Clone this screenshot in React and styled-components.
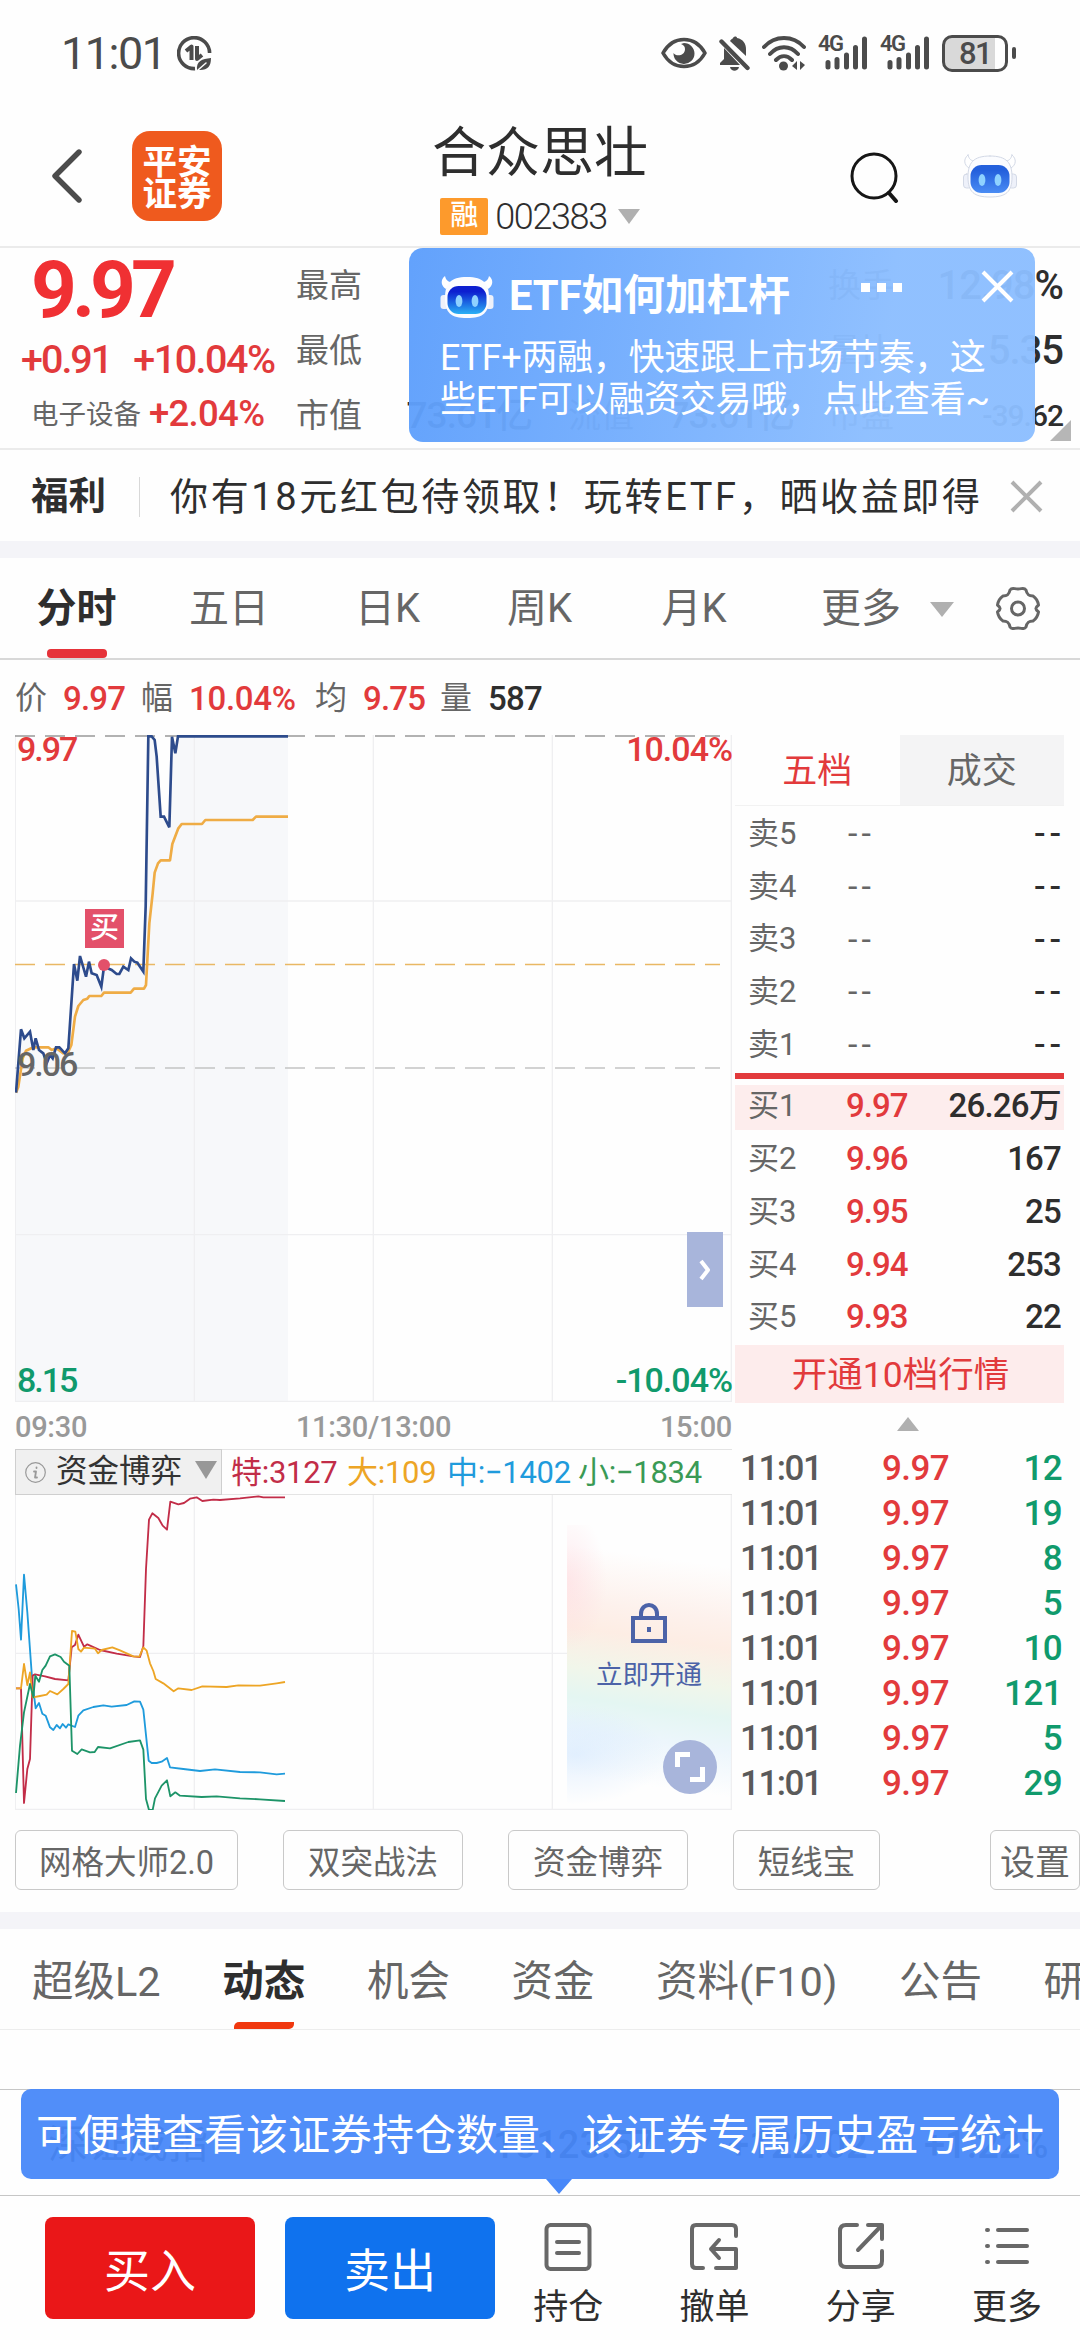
import React from 'react';
import styled, { createGlobalStyle } from 'styled-components';

const colors = {
  red: '#e23a3c',
  green: '#109a6c',
  text: '#2e2e2e',
  grey: '#666666',
  light: '#999999',
  line: '#ededed',
  periwinkle: '#a8b5db',
};

const GlobalStyle = createGlobalStyle`
  * {
    box-sizing: border-box;
  }

  body {
    margin: 0;
    background: #fefefe;
    font-family: Roboto, 'Noto Sans CJK SC', sans-serif;
    color: ${colors.text};
  }
`;

const Screen = styled.div`
  position: relative;
  width: 1080px;
  height: 2340px;
  overflow: hidden;
  display: flex;
  flex-direction: column;
  background: #fefefe;
  white-space: nowrap;
  line-height: 1;
`;

const Num = styled.span`
  font-size: ${({ size }) => size || 33}px;
  font-weight: ${({ weight }) => weight || 500};
  letter-spacing: ${({ track }) => track || 0}px;
  color: ${({ color }) => color || 'inherit'};
`;

/* ---------- status bar ---------- */

const StatusBar = styled.header`
  height: 107px;
  flex: none;
  display: flex;
  align-items: center;
  justify-content: space-between;
  padding: 0 64px 1px 61px;
  color: #4b4b4b;
`;

const StatusGroup = styled.div`
  display: flex;
  align-items: center;
  gap: ${({ gap }) => gap}px;
`;

const Signal = styled.div`
  position: relative;
  width: 50px;
  height: 36px;
`;

const SignalLabel = styled.span`
  position: absolute;
  left: 0;
  top: 0;
  font-size: 22px;
  font-weight: 600;
  line-height: 18px;
  letter-spacing: -1.5px;
`;

const Battery = styled.div`
  width: 66px;
  height: 37px;
  border: 3px solid #4b4b4b;
  border-radius: 10px;
  display: flex;
  align-items: center;
  justify-content: center;
  background: linear-gradient(90deg, #d9d9d9 84%, #fefefe 84%);
  font-size: 31px;
  font-weight: 500;
  letter-spacing: -1.5px;
`;

const BatteryTip = styled.div`
  width: 4px;
  height: 12px;
  border-radius: 2px;
  background: #4b4b4b;
`;

/* ---------- title bar ---------- */

const TitleBar = styled.div`
  height: 141px;
  flex: none;
  display: grid;
  grid-template-columns: 240px 600px 240px;
  border-bottom: 2px solid #ebebeb;
`;

const TitleLeft = styled.div`
  display: flex;
  align-items: center;
  padding: 0 0 2px 51px;
  gap: 48px;
`;

const Logo = styled.div`
  width: 90px;
  height: 90px;
  border-radius: 18px;
  background: #ef5a1e;
  color: #fff;
  display: flex;
  align-items: center;
  justify-content: center;
  text-align: center;
  white-space: normal;
  font-size: 34.5px;
  line-height: 32px;
  font-weight: 700;
  padding: 5px 8px 0;
`;

const TitleCenter = styled.div`
  display: flex;
  flex-direction: column;
  align-items: center;
  padding-top: 20px;
`;

const StockName = styled.h1`
  margin: 0;
  font-size: 54px;
  line-height: 54px;
  font-weight: 400;
`;

const CodeRow = styled.div`
  display: flex;
  align-items: center;
  height: 37px;
  margin-top: 17px;
`;

const MarginTag = styled.span`
  width: 48px;
  height: 37px;
  border-radius: 2px;
  background: #fd9a2c;
  color: #fff;
  font-size: 28px;
  line-height: 35px;
  font-weight: 500;
  text-align: center;
  margin-right: 7px;
`;

const Triangle = styled.i`
  width: 0;
  height: 0;
  margin-left: ${({ gap }) => gap || 0}px;
  border-left: ${({ w }) => w / 2}px solid transparent;
  border-right: ${({ w }) => w / 2}px solid transparent;
  border-${({ up }) => (up ? 'bottom' : 'top')}: ${({ h }) => h}px solid #b0b0b0;
`;

const TitleRight = styled.div`
  display: flex;
  align-items: center;
  gap: 64px;
  padding: 0 0 2px 9px;
`;

/* ---------- quote ---------- */

const Quote = styled.section`
  position: relative;
  height: 202px;
  flex: none;
  display: flex;
  border-bottom: 2px solid #ebebeb;
`;

const PriceBlock = styled.div`
  width: 296px;
  flex: none;
  color: #f03033;
`;

const LastPrice = styled.div`
  height: 80px;
  padding: 2px 0 0 31px;
  font-size: 80px;
  line-height: 80px;
  font-weight: 700;
  letter-spacing: -5px;
`;

const ChangeRow = styled.div`
  display: flex;
  align-items: center;
  height: 58px;
  padding: 6px 0 0 21px;
  gap: 22px;
  color: ${colors.red};
`;

const IndustryRow = styled.div`
  display: flex;
  align-items: center;
  height: 58px;
  padding: 0 0 1px 31px;
  gap: 8px;
  font-size: 27.5px;
  color: ${colors.grey};
`;

const Stats = styled.div`
  flex: 1;
  display: grid;
  grid-template-columns: 64px 172px 36px 64px 162px 34px 58px 1fr;
  grid-template-rows: repeat(3, 65px);
  align-items: center;
  padding: 5px 17px 0 0;
  font-size: 33px;
  color: ${colors.grey};
`;

const StatLabel = styled.span`
  grid-column: ${({ col }) => col};
`;

const StatValue = styled.span`
  text-align: right;
  font-size: ${({ size }) => size || 37}px;
  font-weight: 500;
  letter-spacing: -1px;
  color: ${colors.text};
`;

const Corner = styled.i`
  position: absolute;
  right: 9px;
  bottom: 7px;
  border-left: 21px solid transparent;
  border-bottom: 21px solid #b6b6b6;
`;

const Promo = styled.aside`
  position: absolute;
  left: 409px;
  top: 0;
  width: 626px;
  height: 194px;
  padding: 27px 0 0 31px;
  border-radius: 14px;
  background: linear-gradient(100deg, rgba(92, 158, 252, 0.96), rgba(140, 190, 255, 0.96) 75%);
  color: #fff;
`;

const PromoHead = styled.div`
  display: flex;
  align-items: center;
  height: 42px;
`;

const PromoTitle = styled.strong`
  margin-left: 15px;
  width: 352px;
  font-size: 41.7px;
  font-weight: 700;
`;

const PromoText = styled.p`
  margin: 20px 0 0;
  font-size: 36px;
  line-height: 42px;
  letter-spacing: -0.3px;
`;

const Dots = styled.div`
  display: flex;
  gap: 7px;
  margin-bottom: 18px;

  i {
    width: 9px;
    height: 9px;
    background: #fff;
  }
`;

const PromoClose = styled.div`
  margin: 0 0 20px 79px;

  svg {
    display: block;
  }
`;

/* ---------- notice ---------- */

const Notice = styled.div`
  height: 91px;
  flex: none;
  display: flex;
  align-items: center;
  padding: 2px 37px 0 31px;
  font-size: 38px;
`;

const NoticeTag = styled.b`
  font-size: 37.5px;
  width: 108px;
`;

const NoticeText = styled.span`
  flex: 1;
  padding-left: 30px;
  letter-spacing: 2.65px;
  border-left: 1px solid #d8d8d8;
  line-height: 40px;
`;

const Band = styled.div`
  height: 17px;
  flex: none;
  background: #f4f4f8;
`;

/* ---------- period tabs ---------- */

const PeriodTabs = styled.nav`
  height: 102px;
  flex: none;
  display: grid;
  grid-template-columns: 153px 152px 165px 139px 170px 217px 1fr;
  justify-items: center;
  align-items: center;
  border-bottom: 2px solid #d8d8d8;
  font-size: 40px;
  color: ${colors.grey};
`;

const Tab = styled.span`
  position: relative;
  height: 100%;
  display: flex;
  align-items: center;
  padding-top: 2px;
  font-weight: ${({ active }) => (active ? 700 : 400)};
  color: ${({ active }) => (active ? colors.text : 'inherit')};

  &::after {
    content: '';
    position: absolute;
    display: ${({ active }) => (active ? 'block' : 'none')};
    left: 50%;
    bottom: 0;
    width: 60px;
    height: ${({ slim }) => (slim ? 7 : 9)}px;
    margin-left: -30px;
    border-radius: ${({ slim }) => (slim ? '5px 0 5px 0' : '4px')};
    background: ${({ slim }) => (slim ? '#f0380f' : '#e6333a')};
  }
`;

const GearSlot = styled.div`
  justify-self: start;
  height: 44px;
`;

const InfoRow = styled.div`
  height: 75px;
  flex: none;
  display: flex;
  align-items: center;
  padding: 1px 0 0 15px;
  font-size: 32px;
  color: ${colors.grey};
`;

const InfoValue = styled(Num)`
  width: ${({ w }) => w}px;
  padding-left: 16px;
`;

/* ---------- market area ---------- */

const Market = styled.main`
  height: 1075px;
  flex: none;
  display: grid;
  grid-template-columns: 717px 331px;
  column-gap: 3px;
  padding-left: 15px;
`;

const ChartBox = styled.div`
  position: relative;
  height: ${({ h }) => h}px;

  svg {
    display: block;
  }
`;

const AxisLabel = styled(Num)`
  position: absolute;
  font-size: 34px;
  letter-spacing: ${({ side }) => (side === 'right' ? -1 : -2)}px;
  line-height: 26px;
  ${({ side }) => (side === 'right' ? 'right: 0' : 'left: 2px')};
  top: ${({ y }) => y}px;
`;

const BuyMark = styled.span`
  position: absolute;
  left: 70px;
  top: 174px;
  width: 39px;
  height: 39px;
  background: #e3506a;
  color: #fff;
  font-size: 29px;
  line-height: 38px;
  text-align: center;
  font-weight: 500;
`;

const SideButton = styled.span`
  position: absolute;
  left: 672px;
  top: 497px;
  width: 36px;
  height: 75px;
  display: flex;
  align-items: center;
  justify-content: center;
  background: ${colors.periwinkle};
`;

const TimeAxis = styled.div`
  height: 47px;
  padding-top: 3px;
  display: grid;
  grid-template-columns: 1fr auto 1fr;
  align-items: center;
  color: ${colors.light};
  font-size: 29px;
  font-weight: 500;
  letter-spacing: -0.3px;

  span:last-child {
    text-align: right;
  }
`;

const FlowHead = styled.div`
  height: 46px;
  display: flex;
  align-items: center;
  border-top: 1px solid #e4e4e4;
  border-bottom: 1px solid #e4e4e4;
`;

const FlowSelect = styled.div`
  flex: none;
  width: 207px;
  height: 46px;
  display: flex;
  align-items: center;
  margin-right: 9px;
  padding-left: 9px;
  border: 1px solid #cfcfcf;
  background: #f0f0f0;
  font-size: 31.5px;
  color: #333;

  svg {
    margin-right: 10px;
  }

  i {
    margin: -4px 0 0 13px;
    border-top-color: #989898;
  }
`;

const FlowItem = styled.span`
  flex: none;
  width: ${({ w }) => w}px;
  font-size: 31px;
  letter-spacing: -0.3px;
  color: ${({ color }) => color};
`;

const LockPanel = styled.div`
  position: absolute;
  left: 552px;
  top: 30px;
  width: 164px;
  height: 280px;
  display: flex;
  flex-direction: column;
  align-items: center;
  padding-top: 78px;
  font-size: 26.5px;
  color: #4c63a8;
  background:
    radial-gradient(ellipse 40px 70px at 0 20%, rgba(255, 214, 222, 0.5), transparent),
    radial-gradient(ellipse 90px 50px at 5% 82%, rgba(205, 228, 255, 0.5), transparent),
    linear-gradient(
      188deg,
      rgba(255, 255, 255, 0) 14%,
      #fdf1ec 32%,
      #fdede4 41%,
      #f1f6ea 54%,
      #e4f6f2 64%,
      #edf6fc 75%,
      rgba(255, 255, 255, 0) 90%
    );

  svg {
    margin-bottom: 18px;
  }
`;

const ExpandButton = styled.span`
  position: absolute;
  left: 648px;
  top: 245px;
  width: 54px;
  height: 54px;
  border-radius: 50%;
  background: ${colors.periwinkle};
`;

const BookColumn = styled.div`
  display: flex;
  flex-direction: column;
  width: 329px;
`;

const BookTabs = styled.div`
  display: grid;
  grid-template-columns: 1fr 1fr;
  height: 71px;
  flex: none;
  border-bottom: 1px solid #f2f2f2;
  margin-bottom: 1px;
`;

const BookTab = styled.span`
  display: flex;
  align-items: center;
  justify-content: center;
  padding-top: 2px;
  font-size: 35px;
  color: ${({ active }) => (active ? colors.red : colors.grey)};
  background: ${({ active }) => (active ? 'transparent' : '#f4f4f5')};
`;

const BookRow = styled.div`
  height: ${({ highlight }) => (highlight ? 45 : 52.7)}px;
  margin: ${({ highlight }) => (highlight ? '6px 0 2px' : '0')};
  flex: none;
  display: grid;
  grid-template-columns: 98px 90px 1fr;
  align-items: center;
  padding: 0 3px ${({ highlight }) => (highlight ? 4 : 0)}px 13px;
  font-size: 31px;
  color: ${colors.grey};
  background: ${({ highlight }) => (highlight ? '#fdeded' : 'transparent')};
`;

const Volume = styled(Num)`
  text-align: right;
`;

const Dashes = styled(Num)`
  text-align: ${({ right }) => (right ? 'right' : 'left')};
  font-size: 34px;
  letter-spacing: 4px;
  margin: 0 ${({ right }) => (right ? -4 : 0)}px 0 2px;
`;

const Divider = styled.div`
  height: 6px;
  flex: none;
  margin-top: 3px;
  background: ${colors.red};
`;

const Unlock = styled.div`
  height: 58px;
  flex: none;
  margin-top: 2px;
  display: flex;
  align-items: center;
  justify-content: center;
  padding: 4px 0 0 2px;
  font-size: 35.5px;
  color: ${colors.red};
  background: #fdecec;
`;

const Fold = styled.div`
  height: 42px;
  flex: none;
  display: flex;
  justify-content: center;
  padding: 14px 0 0 16px;
`;

const TradeRow = styled.div`
  height: 45px;
  flex: none;
  display: grid;
  grid-template-columns: 142px 90px 1fr;
  align-items: center;
  padding: 2px 2px 0 5px;
`;

/* ---------- tools and lower tabs ---------- */

const Tools = styled.div`
  height: 102px;
  flex: none;
  display: flex;
  align-items: flex-start;
  padding: 20px 0 0 15px;
`;

const Tool = styled.button`
  flex: none;
  width: ${({ w }) => w}px;
  height: 60px;
  margin: 0 ${({ after }) => after}px 0 0;
  padding: 0 0 2px;
  border: 1px solid #c9c9c9;
  border-radius: 6px;
  background: #fefefe;
  font: 400 ${({ size }) => size || 32.5}px Roboto, 'Noto Sans CJK SC', sans-serif;
  color: ${colors.grey};
`;

const LowerTabs = styled.nav`
  height: 101px;
  flex: none;
  display: flex;
  border-bottom: 1px solid #ededed;
  padding-left: 32px;
  font-size: 41.5px;
  color: ${colors.grey};

  > span {
    margin-right: 61.6px;
    padding-top: 5px;
  }
`;

const IndexStrip = styled.div`
  position: relative;
  height: 107px;
  flex: none;
  margin-top: 59px;
  display: grid;
  grid-template-columns: 445px 235px 196px 1fr;
  align-items: center;
  padding: 4px 0 0 48px;
  border-top: 1px solid #c6c6c6;
  border-bottom: 1px solid #c6c6c6;
  font-size: 40px;
`;

const Tip = styled.div`
  position: absolute;
  left: 21px;
  top: -1px;
  width: 1038px;
  height: 90px;
  border-radius: 10px;
  background: rgba(72, 136, 249, 0.95);
  color: #fff;
  font-size: 42px;
  line-height: 93px;
  padding-left: 15px;

  &::after {
    content: '';
    position: absolute;
    left: 525px;
    top: 90px;
    border: 13.5px solid transparent;
    border-top: 15px solid #4888f9;
    border-bottom: 0;
  }
`;

const Footer = styled.footer`
  flex: 1;
  display: flex;
  padding: 21px 0 0 45px;
`;

const TradeButton = styled.button`
  flex: none;
  width: 210px;
  height: 102px;
  margin: 0 30px 0 0;
  padding: 0 0 3px;
  border: 0;
  border-radius: 8px;
  background: ${({ bg }) => bg};
  color: #fff;
  font: 400 46px Roboto, 'Noto Sans CJK SC', sans-serif;
`;

const Actions = styled.div`
  display: grid;
  grid-template-columns: repeat(4, 146.3px);
  margin-left: -30px;
  padding-top: 5px;
`;

const Action = styled.div`
  display: flex;
  flex-direction: column;
  align-items: center;
  font-size: 35px;
  gap: 18px;
`;

/* ---------- icons ---------- */

const Icon = ({ w, h, box, stroke = 'currentColor', sw = 4, children }) => (
  <svg
    width={w}
    height={h}
    viewBox={box || `0 0 ${w} ${h}`}
    fill="none"
    stroke={stroke}
    strokeWidth={sw}
    strokeLinecap="round"
    strokeLinejoin="round"
  >
    {children}
  </svg>
);

const DataSaver = () => (
  <Icon w={35} h={35} sw={3.6}>
    <path d="M32.6 17 A15.5 15.5 0 1 0 18 32.6" strokeLinecap="butt" />
    <path d="M9 15 L14.5 10.5 V24 M20 10 V23 L25 19" strokeLinecap="butt" strokeWidth="4" />
    <path d="M20 34 C19 25 25 23 34 22 C34 30 31 34 23 34 Z" fill="currentColor" stroke="none" />
    <path d="M21 34 L29 27" stroke="#fefefe" strokeWidth="1.5" />
  </Icon>
);

const EyeIcon = () => (
  <Icon w={46} h={32} sw={3.6}>
    <path d="M2 16 C12 -2 34 -2 44 16 C34 34 12 34 2 16 Z" />
    <path d="M23 6 A10.5 10.5 0 1 1 12.5 16 C15 20 24 19 24 12 C24 9 22 8 20 7 Z" fill="currentColor" stroke="none" />
  </Icon>
);

const BellOffIcon = () => (
  <Icon w={31} h={35}>
    <path
      d="M11 5 C12 3 14 2.5 14 2 C15 0 18 0 18 2 C24 3 27 8 27 13 V20 Z M5 12 L21 29 H1 V27 L5 23 Z M11 31 H20 C19 36 12 36 11 31 Z"
      fill="currentColor"
      stroke="none"
    />
    <path d="M2.5 5.5 L28.5 32" strokeWidth="4.4" />
  </Icon>
);

const WifiIcon = () => (
  <Icon w={44} h={35} sw={4}>
    <path d="M2 11 C13 -1 31 -1 42 11 M8 18 C16 9 28 9 36 18 M14 24 C19 19 25 19 30 24" />
    <circle cx="21.5" cy="30" r="4.5" fill="currentColor" stroke="none" />
    <path d="M35 25 V34 L30 30 Z M38 25 V34 L43 29 Z" fill="currentColor" stroke="none" />
  </Icon>
);

const SignalIcon = () => (
  <Signal>
    <SignalLabel>4G</SignalLabel>
    <Icon w={50} h={36} sw={5}>
      <path d="M10 27.5 V32 M19 24.5 V32 M28.5 20 V32 M37.5 12.5 V32 M46.5 4 V32" />
    </Icon>
  </Signal>
);

const Robot = ({ pale }) => (
  <Icon w={54} h={45} stroke={pale ? '#d3d9e6' : 'none'} sw={1}>
    <defs>
      <linearGradient id={pale ? 'visorPale' : 'visor'} x1="0" y1="0" x2="0" y2="1">
        <stop offset="0.2" stopColor={pale ? '#2460dc' : '#0c1fd0'} />
        <stop offset="1" stopColor={pale ? '#4a8cf4' : '#2bb0f5'} />
      </linearGradient>
    </defs>
    <path d="M5 2 C0 6 1 12 6 15 L12 8 C8 8 6 6 5 2 Z M49 2 C54 6 53 12 48 15 L42 8 C46 8 48 6 49 2 Z" fill="#fff" />
    <rect x="0.5" y="21" width="8" height="14" rx="3" fill="#eef1fa" />
    <rect x="45.5" y="21" width="8" height="14" rx="3" fill="#eef1fa" />
    <path d="M27 3 C44 3 49 10 49 24 C49 39 43 44 27 44 C11 44 5 39 5 24 C5 10 10 3 27 3 Z" fill="#fbfcff" />
    <rect x="7.5" y="12" width="39" height="28" rx="11" fill={`url(#${pale ? 'visorPale' : 'visor'})`} stroke="none" />
    <ellipse cx="19" cy="27" rx="3.4" ry="6" fill="#8fd2ff" stroke="none" />
    <ellipse cx="35" cy="27" rx="3.4" ry="6" fill="#8fd2ff" stroke="none" />
  </Icon>
);

const CloseIcon = ({ color }) => (
  <Icon w={33} h={33} stroke={color} sw={4}>
    <path d="M2 2 L31 31 M31 2 L2 31" strokeLinecap="butt" />
  </Icon>
);

const GearIcon = () => (
  <Icon w={44} h={44} sw={3}>
    <path d="M14 4 C16 1 18 3 22 3 C26 3 28 1 30 4 C31 9 33 10 37 10 C40 12 42 16 42.5 19 C39 22 39 23 42.5 26 C42 29 40 33 37 35 C33 35 31 36 30 41 C28 44 26 42 22 42 C18 42 16 44 14 41 C13 36 11 35 7 35 C4 33 2 29 1.5 26 C5 23 5 22 1.5 19 C2 16 4 12 7 10 C11 10 13 9 14 4 Z" />
    <circle cx="22" cy="22.5" r="6.5" />
  </Icon>
);

/* ---------- chart data (three units per pixel) ---------- */

const priceLine =
  '48,1118 63,928 73,955 90,935 100,990 107,955 117,990 130,1000 140,1030 150,1005 158,1015 168,982 178,982 195,1000 205,985 222,732 232,782 240,708 258,770 267,725 275,760 290,765 304,800 312,740 335,750 350,762 358,762 370,740 385,750 393,715 403,725 412,728 430,755 437,560 445,49 455,49 464,60 470,110 482,290 492,290 508,322 516,50 526,100 534,49 864,49';

const averageLine =
  '48,1118 55,1100 68,1015 78,992 100,982 145,982 155,990 170,985 190,1000 205,995 214,975 225,890 235,858 250,840 262,836 268,828 304,828 312,818 392,818 402,806 432,806 438,795 448,610 458,520 464,458 474,430 482,421 510,421 517,372 535,325 545,312 606,312 616,300 758,300 768,290 864,290';

const flowLines = [
  {
    color: '#1f9bdc',
    points:
      '48,606 56,680 63,772 72,577 82,690 97,900 107,978 117,962 127,994 137,1000 150,1035 160,1043 170,1028 180,1038 188,1025 198,1036 205,1026 225,1034 235,1000 250,984 280,974 310,969 335,973 380,968 403,957 420,958 430,982 446,1135 455,1142 470,1142 485,1138 501,1127 510,1155 550,1160 600,1166 645,1161 720,1169 780,1170 830,1176 855,1174',
  },
  {
    color: '#c22d48',
    points:
      '48,918 63,918 72,1262 82,1160 90,1130 98,880 105,876 135,882 165,890 205,894 215,795 225,788 235,757 252,793 262,786 300,803 350,814 400,822 420,824 430,792 438,560 447,412 457,393 475,407 488,430 501,442 511,358 535,366 552,362 570,349 590,345 607,356 640,352 660,353 720,348 775,342 790,345 855,345',
  },
  {
    color: '#eda525',
    points:
      '48,918 63,918 72,845 82,908 90,870 98,945 120,941 140,937 150,926 172,936 190,920 205,905 216,746 226,748 235,800 243,808 252,796 285,799 294,813 305,803 337,795 360,804 400,822 418,823 430,795 440,805 450,843 460,866 467,890 490,903 521,927 535,918 575,923 607,912 680,914 715,909 780,910 830,903 855,899',
  },
  {
    color: '#1d9468',
    points:
      '48,1232 60,1090 72,990 90,905 100,945 106,880 117,898 127,863 137,850 150,822 165,816 182,824 192,838 208,850 216,1105 232,1115 245,1101 270,1110 284,1109 294,1094 330,1098 385,1079 420,1074 430,1102 438,1250 447,1283 458,1283 465,1248 485,1210 501,1194 511,1242 526,1230 540,1240 605,1244 650,1242 720,1248 780,1251 855,1256',
  },
];

const Grid = ({ top, bottom, rows }) => (
  <g stroke="#efeff1" strokeWidth="4">
    {[46, 583, 1120, 1657, 2194].map((x) => (
      <path key={x} d={`M${x} ${top} V${bottom}`} />
    ))}
    {rows.map((y) => (
      <path key={y} d={`M45 ${y} H2196`} />
    ))}
  </g>
);

const PriceChart = () => (
  <ChartBox h={667}>
    <svg width="717" height="667" viewBox="45 45 2151 2001" fill="none">
      <polygon points={`${priceLine} 864,2046 48,2046`} fill="#f7f8fa" />
      <Grid top={45} bottom={2046} rows={[543, 1544, 2044]} />
      <path d="M45 48 H2160" stroke="#999" strokeWidth="5" strokeDasharray="60 30" />
      <path d="M45 733.5 H2160" stroke="#e9b864" strokeWidth="4" strokeDasharray="60 30" />
      <path d="M45 1044 H2160" stroke="#c4c4c4" strokeWidth="5" strokeDasharray="60 30" />
      <polyline points={averageLine} stroke="#efac45" strokeWidth="8" strokeLinejoin="round" />
      <polyline points={priceLine} stroke="#2d4b8c" strokeWidth="8" />
      <circle cx="312" cy="735" r="18" fill="#e3506a" />
    </svg>
    <BuyMark>买</BuyMark>
    <AxisLabel color={colors.red} y={1}>9.97</AxisLabel>
    <AxisLabel color={colors.red} y={1} side="right">10.04%</AxisLabel>
    <AxisLabel color="#666" y={316}>9.06</AxisLabel>
    <AxisLabel color={colors.green} y={632}>8.15</AxisLabel>
    <AxisLabel color={colors.green} y={632} side="right">-10.04%</AxisLabel>
    <SideButton>
      <Icon w={14} h={26} stroke="#fff" sw={4}>
        <path d="M3 4 L10 13 L3 22" strokeLinecap="butt" />
      </Icon>
    </SideButton>
  </ChartBox>
);

const FlowChart = () => (
  <ChartBox h={315}>
    <svg width="717" height="315" viewBox="45 338 2151 945" fill="none">
      <Grid top={338} bottom={1283} rows={[813, 1281]} />
      {flowLines.map(({ color, points }) => (
        <polyline key={color} points={points} stroke={color} strokeWidth="5.5" strokeLinejoin="round" />
      ))}
    </svg>
    <LockPanel>
      <Icon w={36} h={41} sw={4}>
        <path d="M2 15 H34 V38 H2 Z M10 15 V11 C10 -1 26 -1 26 11 V15" strokeLinejoin="miter" />
        <path d="M18 24 V29" strokeLinecap="butt" />
      </Icon>
      立即开通
    </LockPanel>
    <ExpandButton>
      <Icon w={54} h={54} stroke="#fff" sw={5}>
        <path d="M27 14.5 H14.5 V27 M39.5 27 V39.5 H27" strokeLinecap="butt" strokeLinejoin="miter" />
      </Icon>
    </ExpandButton>
  </ChartBox>
);

const bids = [
  ['买1', '9.97', '26.26万'],
  ['买2', '9.96', '167'],
  ['买3', '9.95', '25'],
  ['买4', '9.94', '253'],
  ['买5', '9.93', '22'],
];

const trades = ['12', '19', '8', '5', '10', '121', '5', '29'];

const OrderBook = () => (
  <BookColumn>
    <BookTabs>
      <BookTab active>五档</BookTab>
      <BookTab>成交</BookTab>
    </BookTabs>
    {['卖5', '卖4', '卖3', '卖2', '卖1'].map((label) => (
      <BookRow key={label}>
        <span>{label}</span>
        <Dashes weight={400}>--</Dashes>
        <Dashes right color={colors.text}>--</Dashes>
      </BookRow>
    ))}
    <Divider />
    {bids.map(([label, price, volume], i) => (
      <BookRow key={label} highlight={i === 0}>
        <span>{label}</span>
        <Num color={colors.red} track={-1}>{price}</Num>
        <Volume color={colors.text} track={-0.8}>{volume}</Volume>
      </BookRow>
    ))}
    <Unlock>开通10档行情</Unlock>
    <Fold>
      <Triangle up w={22} h={14} />
    </Fold>
    {trades.map((volume, i) => (
      <TradeRow key={i}>
        <Num size={35} track={-1.5} color="#5a5a5a">11:01</Num>
        <Num size={35} track={-0.6} color={colors.red}>9.97</Num>
        <Volume size={35} track={-0.6} color={colors.green}>{volume}</Volume>
      </TradeRow>
    ))}
  </BookColumn>
);

const App = () => (
  <>
    <GlobalStyle />
    <Screen>
      <StatusBar>
        <StatusGroup gap={11}>
          <Num size={45} weight={400} track={-1.5}>11:01</Num>
          <DataSaver />
        </StatusGroup>
        <StatusGroup gap={12}>
          <EyeIcon />
          <BellOffIcon />
          <WifiIcon />
          <SignalIcon />
          <SignalIcon />
          <StatusGroup gap={4}>
            <Battery>81</Battery>
            <BatteryTip />
          </StatusGroup>
        </StatusGroup>
      </StatusBar>

      <TitleBar>
        <TitleLeft>
          <Icon w={33} h={54} stroke="#4b4b4b" sw={5.4}>
            <path d="M28 3 L4 27 L28 51" />
          </Icon>
          <Logo>平安证券</Logo>
        </TitleLeft>
        <TitleCenter>
          <StockName>合众思壮</StockName>
          <CodeRow>
            <MarginTag>融</MarginTag>
            <Num size={36} weight={300} track={-1.4}>002383</Num>
            <Triangle w={22} h={15} gap={11} />
          </CodeRow>
        </TitleCenter>
        <TitleRight>
          <Icon w={50} h={54} stroke="#161616" sw={3}>
            <circle cx="25" cy="27" r="22" />
            <path d="M40 44 L47 52" strokeWidth="4" />
          </Icon>
          <Robot pale />
        </TitleRight>
      </TitleBar>

      <Quote>
        <PriceBlock>
          <LastPrice>9.97</LastPrice>
          <ChangeRow>
            <Num size={39.5} track={-2}>+0.91</Num>
            <Num size={39.5} track={-1.5}>+10.04%</Num>
          </ChangeRow>
          <IndustryRow>
            电子设备
            <Num size={36.5} track={-0.7} color={colors.red}>+2.04%</Num>
          </IndustryRow>
        </PriceBlock>
        <Stats>
          <StatLabel col={1}>最高</StatLabel>
          <i />
          <i />
          <i />
          <i />
          <StatLabel col={7}>换手</StatLabel>
          <StatValue size={40}>12.98%</StatValue>
          <StatLabel col={1}>最低</StatLabel>
          <i />
          <i />
          <i />
          <i />
          <StatLabel col={7}>量比</StatLabel>
          <StatValue size={40}>5.35</StatValue>
          <StatLabel col={1}>市值</StatLabel>
          <StatValue>73.61亿</StatValue>
          <i />
          <StatLabel col={4}>流值</StatLabel>
          <StatValue>73.61亿</StatValue>
          <StatLabel col={7}>市盈</StatLabel>
          <StatValue size={30}>-39.62</StatValue>
        </Stats>
        <Corner />
        <Promo>
          <PromoHead>
            <Robot />
            <PromoTitle>ETF如何加杠杆</PromoTitle>
            <Dots>
              <i />
              <i />
              <i />
            </Dots>
            <PromoClose>
              <CloseIcon color="#fff" />
            </PromoClose>
          </PromoHead>
          <PromoText>
            ETF+两融，快速跟上市场节奏，这
            <br />
            些ETF可以融资交易哦，点此查看~
          </PromoText>
        </Promo>
      </Quote>

      <Notice>
        <NoticeTag>福利</NoticeTag>
        <NoticeText>你有18元红包待领取！玩转ETF，晒收益即得</NoticeText>
        <CloseIcon color="#b0b0b0" />
      </Notice>

      <Band />

      <PeriodTabs>
        <Tab active>分时</Tab>
        <Tab>五日</Tab>
        <Tab>日K</Tab>
        <Tab>周K</Tab>
        <Tab>月K</Tab>
        <Tab>
          更多
          <Triangle w={24} h={15} gap={29} />
        </Tab>
        <GearSlot>
          <GearIcon />
        </GearSlot>
      </PeriodTabs>

      <InfoRow>
        价<InfoValue w={94} track={-0.8} color={colors.red}>9.97</InfoValue>
        幅<InfoValue w={142} track={-0.3} color={colors.red}>10.04%</InfoValue>
        均<InfoValue w={93} track={-0.8} color={colors.red}>9.75</InfoValue>
        量<InfoValue w={90} track={-0.8} color={colors.text}>587</InfoValue>
      </InfoRow>

      <Market>
        <div>
          <PriceChart />
          <TimeAxis>
            <span>09:30</span>
            <span>11:30/13:00</span>
            <span>15:00</span>
          </TimeAxis>
          <FlowHead>
            <FlowSelect>
              <Icon w={21} h={21} stroke="#999" sw={1.2}>
                <circle cx="10.5" cy="10.5" r="9.8" />
                <path d="M11.5 5.5 V6 M9 9.5 H11 L10 15.5 H12" strokeWidth="1.8" />
              </Icon>
              资金博弈
              <Triangle w={22} h={18} />
            </FlowSelect>
            <FlowItem w={116} color="#c22d48">特:3127</FlowItem>
            <FlowItem w={100} color="#eda525">大:109</FlowItem>
            <FlowItem w={131} color="#1f9bdc">中:−1402</FlowItem>
            <FlowItem w={131} color="#3a9a55">小:−1834</FlowItem>
          </FlowHead>
          <FlowChart />
        </div>
        <OrderBook />
      </Market>

      <Tools>
        <Tool w={223} after={45}>网格大师2.0</Tool>
        <Tool w={180} after={45}>双突战法</Tool>
        <Tool w={180} after={45}>资金博弈</Tool>
        <Tool w={147} after={110}>短线宝</Tool>
        <Tool w={90} size={35}>设置</Tool>
      </Tools>

      <Band />

      <LowerTabs>
        <Tab slim>超级L2</Tab>
        <Tab slim active>动态</Tab>
        <Tab slim>机会</Tab>
        <Tab slim>资金</Tab>
        <Tab slim>资料(F10)</Tab>
        <Tab slim>公告</Tab>
        <Tab slim>研报</Tab>
      </LowerTabs>

      <IndexStrip>
        <span>深证成指</span>
        <Num size={38}>10123.57</Num>
        <Num size={38}>+122.02</Num>
        <Num size={38}>+1.22%</Num>
        <Tip>可便捷查看该证券持仓数量、该证券专属历史盈亏统计</Tip>
      </IndexStrip>

      <Footer>
        <TradeButton bg="#ea1718">买入</TradeButton>
        <TradeButton bg="#0f72ee">卖出</TradeButton>
        <Actions>
          <Action>
            <Icon w={48} h={50} stroke="#686868">
              <rect x="2.5" y="3" width="43" height="44" rx="4" />
              <path d="M13 20 H35 M13 31 H35" />
            </Icon>
            持仓
          </Action>
          <Action>
            <Icon w={50} h={50} stroke="#686868">
              <path d="M47 14 V7 Q47 3 43 3 H7 Q3 3 3 7 V42 Q3 46 7 46 H14 M27 46 H47 V27 H22 M30 18 L22 27 L30 36" />
            </Icon>
            撤单
          </Action>
          <Action>
            <Icon w={48} h={50} stroke="#686868">
              <path d="M20 3 H9 Q3 3 3 9 V39 Q3 45 9 45 H39 Q45 45 45 39 V29 M31 3 H45 V17 M45 3 L21 28" />
            </Icon>
            分享
          </Action>
          <Action>
            <Icon w={48} h={50} stroke="#686868">
              <path d="M4 8 H5 M15 8 H44 M4 24 H5 M15 24 H44 M4 40 H5 M15 40 H44" />
            </Icon>
            更多
          </Action>
        </Actions>
      </Footer>
    </Screen>
  </>
);

export default App;
